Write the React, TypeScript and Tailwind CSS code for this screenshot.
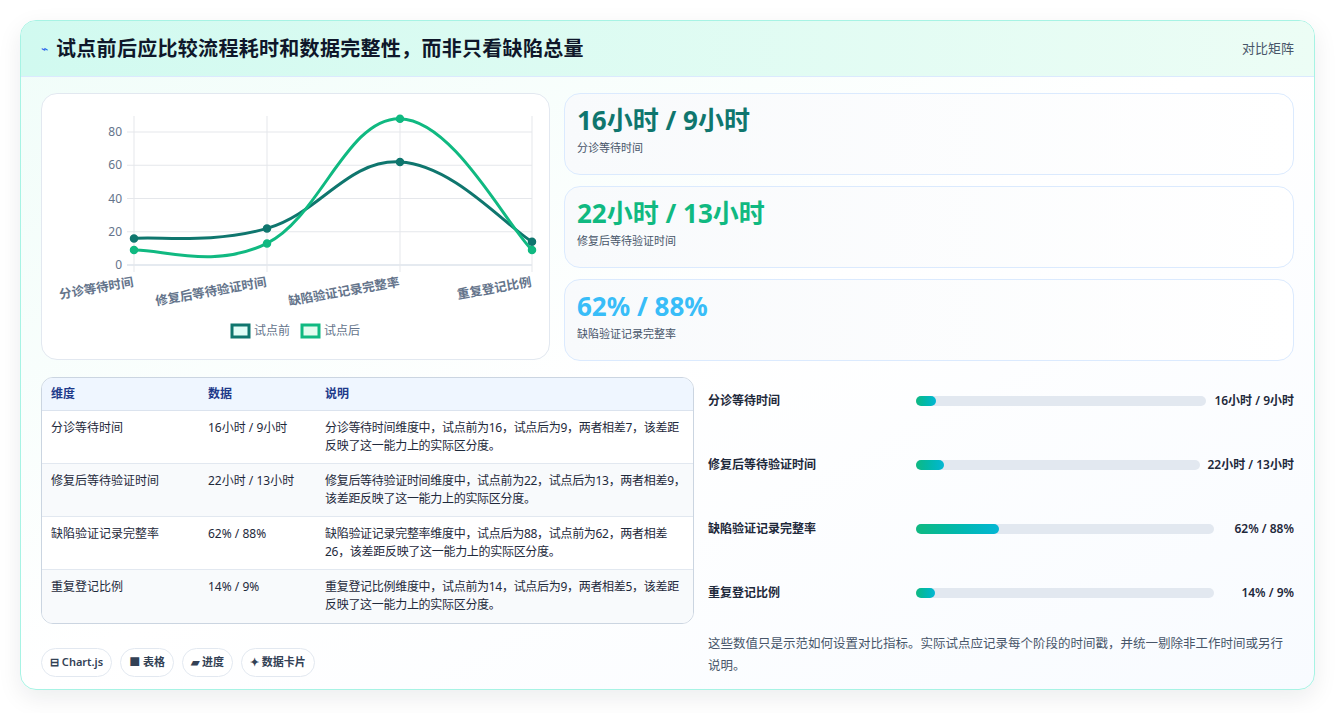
const font = { fontFamily: '"Noto Sans", "Noto Sans CJK SC", sans-serif' }

const labels = ["分诊等待时间", "修复后等待验证时间", "缺陷验证记录完整率", "重复登记比例"]
const before = [16, 22, 62, 14]
const after = [9, 13, 88, 9]
const xs = [92, 225, 358, 490]
const y0 = 171
const yv = (v: number) => y0 - v * 1.6625

function curve(vals: number[]) {
  const pts = vals.map((v, i) => [xs[i], yv(v)])
  const t = 0.4
  let d = `M${pts[0][0]},${pts[0][1]}`
  for (let i = 0; i < pts.length - 1; i++) {
    const p0 = pts[i - 1] || pts[i]
    const p1 = pts[i]
    const p2 = pts[i + 1]
    const p3 = pts[i + 2] || p2
    const c1 = [p1[0] + ((p2[0] - p0[0]) * t) / 2, p1[1] + ((p2[1] - p0[1]) * t) / 2]
    const c2 = [p2[0] - ((p3[0] - p1[0]) * t) / 2, p2[1] - ((p3[1] - p1[1]) * t) / 2]
    d += ` C${c1[0]},${c1[1]} ${c2[0]},${c2[1]} ${p2[0]},${p2[1]}`
  }
  return d
}

const rows = [
  { name: "分诊等待时间", data: "16小时 / 9小时", desc: "分诊等待时间维度中，试点前为16，试点后为9，两者相差7，该差距反映了这一能力上的实际区分度。", pct: 7 },
  { name: "修复后等待验证时间", data: "22小时 / 13小时", desc: "修复后等待验证时间维度中，试点前为22，试点后为13，两者相差9，该差距反映了这一能力上的实际区分度。", pct: 10 },
  { name: "缺陷验证记录完整率", data: "62% / 88%", desc: "缺陷验证记录完整率维度中，试点后为88，试点前为62，两者相差26，该差距反映了这一能力上的实际区分度。", pct: 28 },
  { name: "重复登记比例", data: "14% / 9%", desc: "重复登记比例维度中，试点前为14，试点后为9，两者相差5，该差距反映了这一能力上的实际区分度。", pct: 6.5 },
]

const stats = [
  { v: "16小时 / 9小时", l: "分诊等待时间", c: "text-[#0f766e]" },
  { v: "22小时 / 13小时", l: "修复后等待验证时间", c: "text-[#10b981]" },
  { v: "62% / 88%", l: "缺陷验证记录完整率", c: "text-[#38bdf8]" },
]

function Chart() {
  return (
    <svg width="509" height="266" viewBox="0 0 509 266">
      {[0, 20, 40, 60, 80].map((v) => (
        <g key={v}>
          <line x1={85} x2={490} y1={yv(v)} y2={yv(v)} stroke={v === 0 ? "#cbd5e1" : "#e5e7eb"} />
          <text x={80} y={yv(v) + 4} textAnchor="end" fontSize="12" fill="#64748b">{v}</text>
        </g>
      ))}
      {xs.map((x) => (
        <line key={x} x1={x} x2={x} y1={22} y2={178} stroke="#e5e7eb" />
      ))}
      {labels.map((l, i) => (
        <text key={l} x={xs[i]} y={192} textAnchor="end" fontSize="12.5" fontWeight="600" fill="#64748b" transform={`rotate(-10 ${xs[i]} 192)`}>{l}</text>
      ))}
      <path d={curve(before)} fill="none" stroke="#0f766e" strokeWidth="3" />
      <path d={curve(after)} fill="none" stroke="#10b981" strokeWidth="3" />
      {before.map((v, i) => <circle key={"b" + i} cx={xs[i]} cy={yv(v)} r="3.5" fill="#0f766e" stroke="#0f766e" strokeWidth="1.5" />)}
      {after.map((v, i) => <circle key={"a" + i} cx={xs[i]} cy={yv(v)} r="3.5" fill="#10b981" stroke="#10b981" strokeWidth="1.5" />)}
      <rect x={190} y={231} width={17} height={12} fill="#ccfbf1" fillOpacity="0.6" stroke="#0f766e" strokeWidth="3" />
      <text x={212} y={241} fontSize="12" fill="#64748b">试点前</text>
      <rect x={260} y={231} width={17} height={12} fill="#d1fae5" fillOpacity="0.6" stroke="#10b981" strokeWidth="3" />
      <text x={282} y={241} fontSize="12" fill="#64748b">试点后</text>
    </svg>
  )
}

export default function App() {
  return (
    <div className="w-[1336px] h-[713px] bg-white pt-5 pl-5" style={font}>
      <div className="w-[1295px] h-[670px] rounded-2xl border border-[#a7f3e4] bg-gradient-to-br from-[#f0fdf9] via-white to-[#f8fbff] shadow-[0_8px_24px_rgba(15,23,42,0.08)] overflow-hidden">
        <div className="h-14 flex items-center justify-between px-5 bg-gradient-to-r from-[#d1faf0] to-[#ecfdf5] border-b border-[#dbeafe]">
          <div className="flex items-center gap-2">
            <span className="text-[#2563eb] text-xs">⌁</span>
            <h1 className="text-[20px] font-bold text-[#0f172a] tracking-[0.3px]">试点前后应比较流程耗时和数据完整性，而非只看缺陷总量</h1>
          </div>
          <span className="text-[13px] text-[#475569]">对比矩阵</span>
        </div>
        <div className="px-5 pt-4 grid grid-cols-[509px_1fr] gap-x-[14px]">
          <div className="h-[267px] rounded-2xl border border-[#e2e8f0] bg-white">
            <Chart />
          </div>
          <div className="flex flex-col gap-[11px]">
            {stats.map((s) => (
              <div key={s.l} className="h-[82px] rounded-2xl border border-[#dbeafe] bg-gradient-to-r from-[#f8fafc] to-white px-3 pt-2">
                <div className={`text-[26px] font-bold leading-9 ${s.c}`}>{s.v}</div>
                <div className="text-[11px] text-[#475569] mt-0.5">{s.l}</div>
              </div>
            ))}
          </div>
        </div>
        <div className="px-5 pt-4 grid grid-cols-[653px_1fr] gap-x-[14px]">
          <div>
            <div className="rounded-xl border border-[#cbd5e1] overflow-hidden text-[12px] text-[#1e293b] bg-white">
              <div className="grid grid-cols-[157px_117px_1fr] h-[33px] items-center px-[9px] bg-[#eff6ff] border-b border-[#dbe3ee] font-semibold text-[#1e3a8a]">
                <span>维度</span><span>数据</span><span>说明</span>
              </div>
              {rows.map((r, i) => (
                <div key={r.name} className={`grid grid-cols-[157px_117px_1fr] h-[53px] pt-[8px] pl-[9px] pr-[4px] leading-[18px] ${i % 2 ? "bg-[#f8fafc]" : "bg-white"} ${i < 3 ? "border-b border-[#e2e8f0]" : ""}`}>
                  <span>{r.name}</span><span>{r.data}</span><span className="tracking-[-0.3px]">{r.desc}</span>
                </div>
              ))}
            </div>
            <div className="flex gap-2 mt-6 text-[11px] font-semibold text-[#334155]">
              {["⊟ Chart.js", "■ 表格", "▰ 进度", "✦ 数据卡片"].map((c) => (
                <span key={c} className="h-[29px] px-2 flex items-center rounded-full border border-[#e2e8f0] bg-white">{c}</span>
              ))}
            </div>
          </div>
          <div className="-mt-[8px]">
            {rows.map((r) => (
              <div key={r.name} className="h-16 flex items-center text-[12px] font-semibold text-[#1e293b]">
                <span className="w-[208px] shrink-0">{r.name}</span>
                <div className="flex-1 h-[10px] rounded-full bg-[#e2e8f0] mr-2">
                  <div className="h-full rounded-full bg-gradient-to-r from-[#10b981] to-[#06b6d4]" style={{ width: `${r.pct}%` }} />
                </div>
                <span className="whitespace-nowrap min-w-[72px] text-right">{r.data}</span>
              </div>
            ))}
            <p className="text-[12.5px] text-[#475569] leading-[22px] mt-2 pr-1">这些数值只是示范如何设置对比指标。实际试点应记录每个阶段的时间戳，并统一剔除非工作时间或另行说明。</p>
          </div>
        </div>
      </div>
    </div>
  )
}
